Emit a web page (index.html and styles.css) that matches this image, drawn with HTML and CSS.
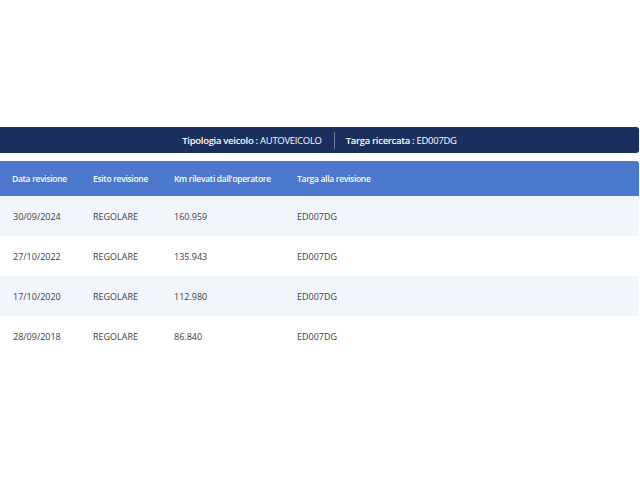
FILE: index.html
```html
<!DOCTYPE html>
<html lang="it">
<head>
<meta charset="utf-8">
<link rel="stylesheet" href="styles.css">
</head>
<body>
<div class="page">
  <div class="summary">
    <div class="item"><b>Tipologia veicolo :</b> AUTOVEICOLO</div>
    <div class="sep"></div>
    <div class="item"><b>Targa ricercata :</b> ED007DG</div>
  </div>
  <table class="grid">
    <thead>
      <tr><th class="c1">Data revisione</th><th class="c2">Esito revisione</th><th class="c3">Km rilevati dall'operatore</th><th>Targa alla revisione</th></tr>
    </thead>
    <tbody>
      <tr><td>30/09/2024</td><td>REGOLARE</td><td>160.959</td><td>ED007DG</td></tr>
      <tr><td>27/10/2022</td><td>REGOLARE</td><td>135.943</td><td>ED007DG</td></tr>
      <tr><td>17/10/2020</td><td>REGOLARE</td><td>112.980</td><td>ED007DG</td></tr>
      <tr><td>28/09/2018</td><td>REGOLARE</td><td>86.840</td><td>ED007DG</td></tr>
    </tbody>
  </table>
</div>
</body>
</html>
```
FILE: styles.css
```css
html, body { margin: 0; padding: 0; background: #fff; }
body { font-family: "Open Sans", "Noto Sans", sans-serif; }
.page { padding-top: 127px; width: 639px; }
.summary {
  height: 26px;
  background: #1b2f5e;
  border-radius: 0 3px 3px 0;
  display: flex;
  align-items: center;
  justify-content: center;
  color: #fff;
  font-size: 9.5px;
  letter-spacing: -0.3px;
}
.summary b { font-weight: 600; }
.sep { width: 1px; height: 17px; background: #6f7fa3; margin: 0 11px 0 12px; }
.grid {
  margin-top: 8px;
  width: 639px;
  border-collapse: collapse;
}
.grid th {
  background: #4b77cd;
  color: #fff;
  font-weight: 600;
  font-size: 8.5px;
  letter-spacing: -0.3px;
  text-align: left;
  height: 35px;
  padding: 0 0 0 12px;
  box-sizing: border-box;
}
.grid thead tr th:last-child { border-radius: 0 3px 0 0; }
.grid .c1 { width: 81px; }
.grid .c2 { width: 81px; }
.grid .c3 { width: 123px; }
.grid td {
  height: 40px;
  padding: 0 0 0 13px;
  color: #3d3d3d;
  font-size: 9px;
  letter-spacing: 0;
  box-sizing: border-box;
}
.grid tbody tr td:nth-child(n+2) { padding-left: 12px; }
.grid tbody tr:nth-child(odd) td { background: #f2f6fc; }
```
